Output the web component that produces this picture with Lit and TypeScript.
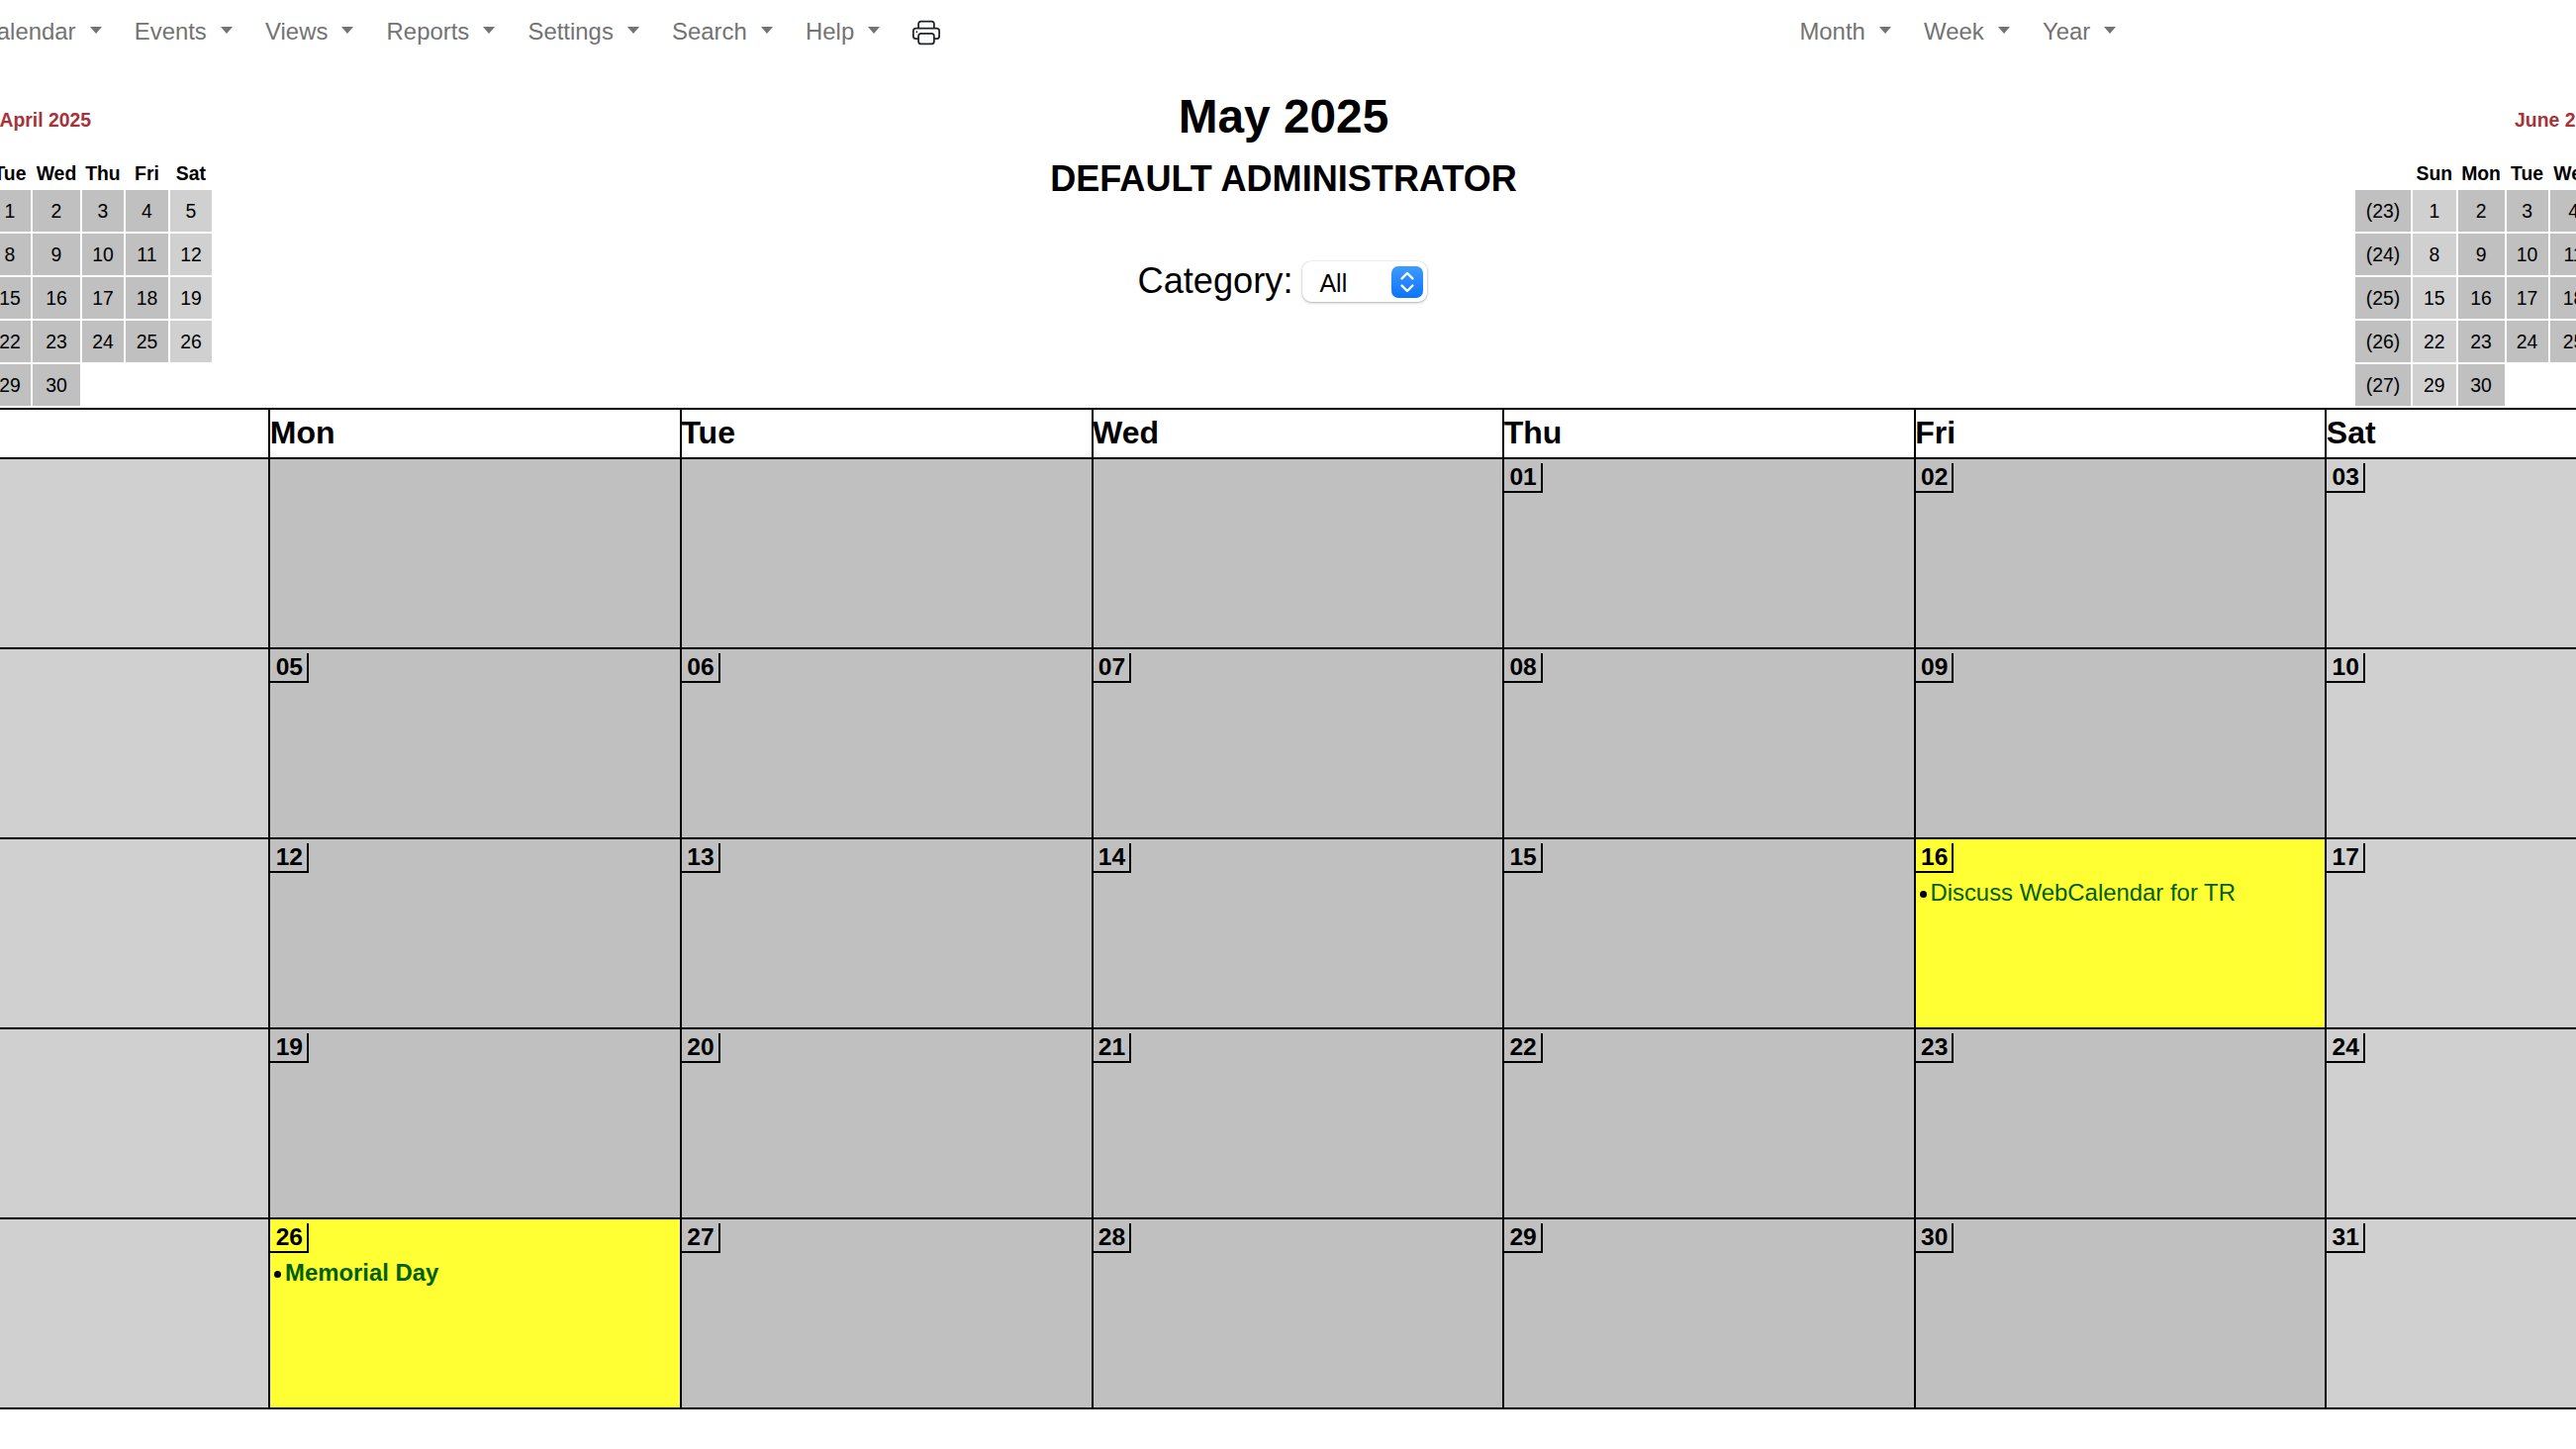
import { LitElement, html, css, svg } from "lit";
import { customElement } from "lit/decorators.js";

const FONT = css`"Liberation Sans", Arial, Helvetica, sans-serif`;

type Ev = { text: string; bold?: boolean };
const EVENTS: Record<number, Ev> = {
  16: { text: "Discuss WebCalendar for TR" },
  26: { text: "Memorial Day", bold: true },
};

const LEFT_MENU = ["Calendar", "Events", "Views", "Reports", "Settings", "Search", "Help"];
const RIGHT_MENU = ["Month", "Week", "Year"];
const DOW = ["Sun", "Mon", "Tue", "Wed", "Thu", "Fri", "Sat"];

/** Builds rows of seven day numbers, 0 for a blank cell. */
function weeks(firstDow: number, days: number): number[][] {
  const cells: number[] = [];
  for (let i = 0; i < firstDow; i++) cells.push(0);
  for (let d = 1; d <= days; d++) cells.push(d);
  while (cells.length % 7) cells.push(0);
  const rows: number[][] = [];
  for (let i = 0; i < cells.length; i += 7) rows.push(cells.slice(i, i + 7));
  return rows;
}

@customElement("mini-month")
class MiniMonth extends LitElement {
  static properties = {
    title: { type: String },
    first: { type: Number },
    days: { type: Number },
    startWeek: { type: Number },
    side: { type: String },
  };
  declare title: string;
  declare first: number;
  declare days: number;
  declare startWeek: number;
  declare side: string;

  static styles = css`
    :host {
      display: block;
      padding-top: 46px;
      font-family: ${FONT};
      font-size: 19.4px;
      color: #000;
    }
    .name {
      height: 22px;
      line-height: 22px;
      margin-bottom: 26px;
      font-weight: 700;
      color: #a73238;
      white-space: nowrap;
    }
    .name.left { padding-left: 107px; }
    .name.right { padding-left: 163px; }
    table {
      border-collapse: separate;
      border-spacing: 2px;
      table-layout: fixed;
    }
    th { height: 30px; padding: 0; font-weight: 700; text-align: center; }
    td { height: 42px; padding: 0; text-align: center; }
    td.day { background: #c0c0c0; }
    td.end { background: #d0d0d0; }
    td.wk { background: #c0c0c0; }
    .c-wk { width: 56px; }
    .c0 { width: 43.5px; }
    .c1 { width: 47px; }
    .c2 { width: 42px; }
    .c3 { width: 48px; }
    .c4 { width: 42px; }
    .c5 { width: 43px; }
    .c6 { width: 42px; }
  `;

  render() {
    const rows = weeks(this.first, this.days);
    const hasWk = this.startWeek > 0;
    return html`
      <div class="name ${this.side}">${this.title}</div>
      <table>
        <colgroup>
          ${hasWk ? html`<col class="c-wk" />` : ""}
          ${DOW.map((_, i) => html`<col class="c${i}" />`)}
        </colgroup>
        <tr>
          ${hasWk ? html`<th></th>` : ""}
          ${DOW.map((d) => html`<th>${d}</th>`)}
        </tr>
        ${rows.map(
          (r, ri) => html`<tr>
            ${hasWk ? html`<td class="wk">(${this.startWeek + ri})</td>` : ""}
            ${r.map((d, i) =>
              d === 0
                ? html`<td></td>`
                : html`<td class=${i === 0 || i === 6 ? "end" : "day"}>${d}</td>`,
            )}
          </tr>`,
        )}
      </table>
    `;
  }
}

const PRINTER = svg`
  <path d="M2.5 8a.5.5 0 1 0 0-1 .5.5 0 0 0 0 1z"/>
  <path d="M5 1a2 2 0 0 0-2 2v2H2a2 2 0 0 0-2 2v3a2 2 0 0 0 2 2h1v1a2 2 0 0 0 2 2h6a2 2 0 0 0 2-2v-1h1a2 2 0 0 0 2-2V7a2 2 0 0 0-2-2h-1V3a2 2 0 0 0-2-2H5zM4 3a1 1 0 0 1 1-1h6a1 1 0 0 1 1 1v2H4V3zm1 5a2 2 0 0 0-2 2v1H2a1 1 0 0 1-1-1V7a1 1 0 0 1 1-1h12a1 1 0 0 1 1 1v3a1 1 0 0 1-1 1h-1v-1a2 2 0 0 0-2-2H5zm7 2v3a1 1 0 0 1-1 1H5a1 1 0 0 1-1-1v-3a1 1 0 0 1 1-1h6a1 1 0 0 1 1 1z"/>
`;

@customElement("app-root")
export class AppRoot extends LitElement {
  static styles = css`
    :host {
      display: block;
      width: 2603px;
      height: 1464px;
      overflow: hidden;
      background: #fff;
      font-family: ${FONT};
      color: #000;
    }
    .inner {
      width: 2909.6px;
      margin-left: -144.25px;
    }

    /* top menu */
    nav {
      display: flex;
      height: 64px;
      box-sizing: border-box;
      padding: 13.7px 0 0 123.8px;
    }
    .menu { display: flex; gap: 33.25px; }
    .menu.right { margin-left: 868px; }
    .item {
      display: flex;
      gap: 14px;
      font-size: 23.9px;
      line-height: 36px;
      color: #737373;
      white-space: nowrap;
    }
    .caret {
      width: 0;
      height: 0;
      margin-top: 13px;
      border-top: 7px solid #737373;
      border-left: 6.5px solid transparent;
      border-right: 6.5px solid transparent;
    }
    .print {
      width: 28px;
      height: 28px;
      margin-top: 5.3px;
      fill: #212529;
    }

    /* page head */
    .head {
      display: flex;
      height: 348px;
    }
    mini-month.april { margin-left: 36.7px; }
    mini-month.june { margin-right: 5.8px; }
    .center {
      flex: 1;
      display: flex;
      flex-direction: column;
      align-items: center;
      padding-top: 25.4px;
    }
    h1 {
      margin: 0;
      font-size: 47.8px;
      line-height: 58px;
      font-weight: 700;
    }
    h2 {
      margin: 11.5px 0 0;
      font-size: 36.1px;
      line-height: 44px;
      font-weight: 700;
      white-space: nowrap;
    }
    .category {
      display: flex;
      align-items: flex-start;
      gap: 10px;
      margin-top: 59.2px;
      padding-right: 2px;
      font-size: 36.2px;
      line-height: 44px;
    }
    .select {
      box-sizing: border-box;
      display: flex;
      align-items: center;
      justify-content: space-between;
      width: 126px;
      height: 41px;
      margin-top: 2.2px;
      padding: 0 4px 0 17px;
      border-radius: 9px;
      background: #fff;
      box-shadow: 0 0 0 0.5px rgba(0, 0, 0, 0.08), 0 1px 3px rgba(0, 0, 0, 0.28);
      font-size: 25px;
      line-height: 41px;
    }
    .select span { padding-top: 3px; }
    .stepper {
      width: 32px;
      height: 32px;
      border-radius: 7px;
      background: linear-gradient(#3f9bff, #0a74fb);
    }
    .stepper path {
      fill: none;
      stroke: #fff;
      stroke-width: 2.4;
      stroke-linecap: round;
      stroke-linejoin: round;
    }

    /* month grid */
    .month {
      display: grid;
      grid-template-columns: repeat(7, 415.6px);
      grid-template-rows: 50px repeat(5, 192px);
      border-bottom: 2px solid #000;
    }
    .dow {
      box-sizing: border-box;
      border-top: 2px solid #000;
      border-left: 2px solid #000;
      padding-top: 4.9px;
      font-size: 32px;
      line-height: 36px;
      font-weight: 700;
      text-indent: -0.5px;
    }
    .cell {
      box-sizing: border-box;
      border-top: 2px solid #000;
      border-left: 2px solid #000;
      padding-top: 4px;
      background: #c0c0c0;
      font-size: 23.9px;
    }
    .cell.weekend { background: #d0d0d0; }
    .cell.events { background: #ffff33; }
    .num {
      display: block;
      box-sizing: border-box;
      width: 38.7px;
      height: 30px;
      padding: 0.3px 4px 0 5.3px;
      border-right: 2px solid #000;
      border-bottom: 2px solid #000;
      font-size: 24.6px;
      line-height: 27px;
      font-weight: 700;
    }
    .event {
      display: flex;
      align-items: flex-start;
      gap: 3.7px;
      margin-top: 5.9px;
      padding-left: 4px;
      line-height: 28px;
      color: #006000;
      white-space: nowrap;
    }
    .event.bold { font-weight: 700; }
    .dot {
      flex: none;
      width: 7px;
      height: 7px;
      margin-top: 12px;
      border-radius: 50%;
      background: #000;
    }
  `;

  private menu(names: string[]) {
    return names.map(
      (n) => html`<div class="item"><span>${n}</span><span class="caret"></span></div>`,
    );
  }

  private cell(day: number, i: number) {
    const ev = EVENTS[day];
    const classes = ["cell", i === 0 || i === 6 ? "weekend" : "", ev ? "events" : ""].join(" ");
    return html`<div class=${classes}>
      ${day ? html`<span class="num">${String(day).padStart(2, "0")}</span>` : ""}
      ${ev
        ? html`<div class="event ${ev.bold ? "bold" : ""}">
            <span class="dot"></span><span>${ev.text}</span>
          </div>`
        : ""}
    </div>`;
  }

  render() {
    const rows = weeks(4, 31);
    return html`<div class="inner">
      <nav>
        <div class="menu">
          ${this.menu(LEFT_MENU)}
          <svg class="print" viewBox="0 0 16 16">${PRINTER}</svg>
        </div>
        <div class="menu right">${this.menu(RIGHT_MENU)}</div>
      </nav>
      <div class="head">
        <mini-month class="april" side="left" title="April 2025" first="2" days="30"></mini-month>
        <div class="center">
          <h1>May 2025</h1>
          <h2>DEFAULT ADMINISTRATOR</h2>
          <div class="category">
            <span>Category:</span>
            <div class="select">
              <span>All</span>
              <svg class="stepper" viewBox="0 0 32 32">
                <path d="M10.6 12.4 16 7 21.4 12.4" />
                <path d="M10.6 19.6 16 25 21.4 19.6" />
              </svg>
            </div>
          </div>
        </div>
        <mini-month
          class="june"
          side="right"
          title="June 2025"
          first="0"
          days="30"
          startWeek="23"
        ></mini-month>
      </div>
      <div class="month">
        ${DOW.map((d) => html`<div class="dow">${d}</div>`)}
        ${rows.map((r) => r.map((d, i) => this.cell(d, i)))}
      </div>
    </div>`;
  }
}
void MiniMonth;
